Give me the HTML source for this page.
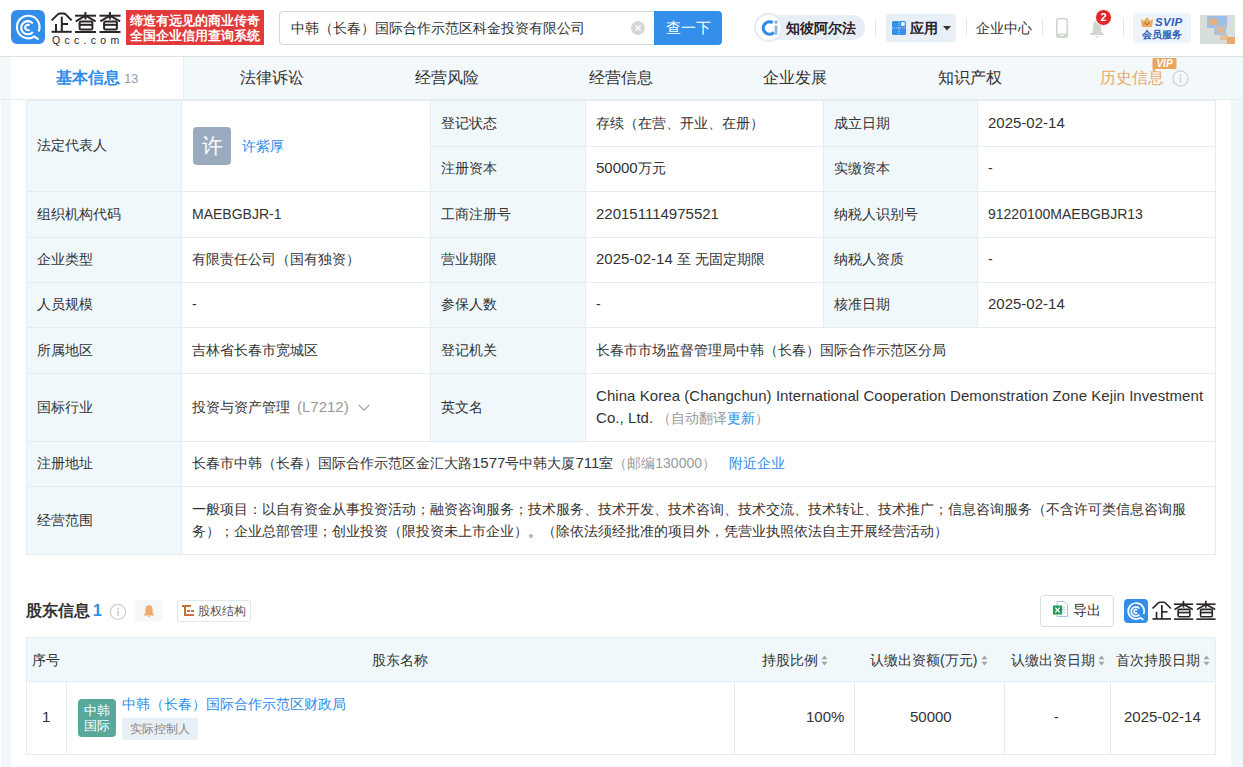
<!DOCTYPE html><html><head><meta charset="utf-8"><style>
*{box-sizing:border-box;margin:0;padding:0}
html,body{width:1243px;height:767px;overflow:hidden}
body{position:relative;background:#eff7fb;font-family:"Liberation Sans",sans-serif;color:#333;font-size:14px}
.a{position:absolute;white-space:nowrap}
#hdr{position:absolute;left:0;top:0;width:1243px;height:57px;background:#fff;border-bottom:1px solid #dde2dd}
#main{position:absolute;left:11px;top:57px;width:1220px;height:710px;background:#fff}
#tabs{position:absolute;left:0;top:57px;width:1243px;height:43px;background:#f3f8fb;border-bottom:1px solid #e6edf3}
.tab{position:absolute;top:0;height:42px;width:174px;text-align:center;line-height:42px;font-size:16px;color:#333}
.cell{position:absolute;border-right:1px solid #e4edf4;border-bottom:1px solid #e4edf4;padding-left:11px;font-size:14px;color:#333;white-space:nowrap}
.cell>span.t{position:absolute;left:10px;top:50%;transform:translateY(calc(-50% - 1px));line-height:22px}
.lb{background:#f0f8fc}
.blue{color:#2d8de8}
.gray{color:#999}
.num{font-size:15px}
</style></head><body>
<div id="hdr"></div><div id="main"></div><div id="tabs"></div><div class="a" style="left:0;top:100px;width:1px;height:667px;background:#fcfdfe"></div>
<div class="a" style="left:11px;top:10px;width:34px;height:34px;border-radius:6px;background:#338eea"></div>
<svg class="a" style="left:11px;top:10px" width="34" height="34" viewBox="0 0 34 34">
<path d="M 27.6 21.5 A 11.3 11.3 0 1 0 22.5 27.0" fill="none" stroke="#fff" stroke-width="2.1"/>
<line x1="22.3" y1="26.0" x2="27.6" y2="29.4" stroke="#fff" stroke-width="2.1"/>
<path d="M 21.8 13.4 A 6.6 6.6 0 1 0 21.8 22.0" fill="none" stroke="#fff" stroke-width="2.1"/>
<path d="M 18.6 15.6 A 2.6 2.6 0 1 0 18.6 19.4" fill="none" stroke="#fff" stroke-width="2.1"/>
</svg>
<svg class="a" style="left:48px;top:6px" width="76" height="38" viewBox="0 0 76 38">
<g fill="none" stroke="#2b2428" stroke-width="2" stroke-linecap="butt">
<path d="M3.6 14.4 L9.6 8.6 Q10.6 7.6 12 7.6 L15.6 7.6 Q17 7.6 18 8.6 L23.6 14.4"/>
<line x1="13.8" y1="10.6" x2="13.8" y2="25.8"/>
<line x1="8" y1="18" x2="8" y2="25.8"/>
<line x1="13.8" y1="18" x2="20" y2="18"/>
<line x1="3.5" y1="25.8" x2="23.8" y2="25.8"/>
<g id="cha">
<line x1="27" y1="9.7" x2="48" y2="9.7"/>
<line x1="37.4" y1="6" x2="37.4" y2="13.5"/>
<path d="M37.4 9.7 L27.8 15.4 M37.4 9.7 L47.6 15.4"/>
<rect x="31.6" y="15.4" width="12.8" height="8" rx="1.5"/>
<line x1="31.6" y1="18.8" x2="44.4" y2="18.8"/>
<line x1="27" y1="26" x2="48" y2="26"/>
</g>
<use href="#cha" transform="translate(24.5 0)"/>
</g></svg>
<div class="a" style="left:52px;top:34px;font-size:10.5px;font-weight:normal;line-height:12px;letter-spacing:4.3px;color:#2b2428">Qcc.com</div>
<div class="a" style="left:126px;top:10px;width:138px;height:35px;background:#e23a3a;color:#fff;font-size:13px;line-height:15px;font-weight:bold;padding:3px 0 0 4px;letter-spacing:0px">缔造有远见的商业传奇<br>全国企业信用查询系统</div>
<div class="a" style="left:279px;top:11px;width:377px;height:34px;border:1px solid #d5dbd7;border-right:none;border-radius:4px 0 0 4px;background:#fff"></div>
<div class="a" style="left:291px;top:19px;font-size:14px;line-height:18px;color:#333">中韩（长春）国际合作示范区科金投资有限公司</div>
<div class="a" style="left:631px;top:21px;width:14px;height:14px;border-radius:50%;background:#d4d9d4"></div>
<svg class="a" style="left:631px;top:21px" width="14" height="14"><path d="M4.5 4.5 L9.5 9.5 M9.5 4.5 L4.5 9.5" stroke="#fff" stroke-width="1.3"/></svg>
<div class="a" style="left:654px;top:11px;width:68px;height:34px;background:#338fea;border-radius:0 4px 4px 0;color:#fff;font-size:15px;line-height:34px;text-align:center">查一下</div>
<div class="a" style="left:768px;top:15px;width:97px;height:25px;border-radius:0 13px 13px 0;background:#e8eef5"></div>
<div class="a" style="left:754px;top:13px;width:29px;height:29px;border-radius:50%;background:#fff;border:2.5px solid #e4ebf3"></div>
<svg class="a" style="left:755px;top:14px" width="27" height="27" viewBox="0 0 27 27">
<path d="M 17.6 8.63 A 6.2 6.2 0 1 0 18.88 18.38" fill="none" stroke="#2f8ae8" stroke-width="3.2"/>
<circle cx="21" cy="8.1" r="1.8" fill="#8db5e2"/>
<line x1="21" y1="11.5" x2="21" y2="20.6" stroke="#8db5e2" stroke-width="2.8"/>
</svg>
<div class="a" style="left:786px;top:19px;font-size:14px;font-weight:bold;line-height:18px;color:#2a2226">知彼阿尔法</div>
<div class="a" style="left:875px;top:19px;width:1px;height:17px;background:#e3e8ee"></div>
<div class="a" style="left:886px;top:14px;width:70px;height:28px;border-radius:3px;background:#e9eff6"></div>
<svg class="a" style="left:892px;top:21px" width="14" height="14" viewBox="0 0 14 14">
<rect x="0" y="0" width="14" height="14" rx="1.5" fill="#3290ea"/>
<rect x="9.2" y="1.2" width="3.6" height="3.6" fill="#fff"/>
<path d="M7 0 V14 M0 7 H14" stroke="#e9f2fc" stroke-width="0.8" stroke-dasharray="1 1"/>
</svg>
<div class="a" style="left:910px;top:19px;font-size:14px;font-weight:bold;line-height:18px;color:#2a2226">应用</div>
<svg class="a" style="left:943px;top:26px" width="8" height="5"><path d="M0 0 H8 L4 4.5 Z" fill="#333"/></svg>
<div class="a" style="left:966px;top:19px;width:1px;height:17px;background:#e3e8ee"></div>
<div class="a" style="left:976px;top:19px;font-size:14px;line-height:18px;color:#333">企业中心</div>
<div class="a" style="left:1042px;top:18px;width:1px;height:17px;background:#e3e8ee"></div>
<svg class="a" style="left:1056px;top:18px" width="12" height="20" viewBox="0 0 12 20">
<rect x="0.8" y="0.8" width="10.4" height="18.4" rx="2" fill="none" stroke="#cfd5cf" stroke-width="1.6"/>
<rect x="0.8" y="15.5" width="10.4" height="3.7" fill="#cfd5cf"/>
<rect x="4.3" y="16.8" width="3.4" height="1" fill="#fff"/>
</svg>
<svg class="a" style="left:1088px;top:18px" width="18" height="21" viewBox="0 0 18 21">
<path d="M9 2.5 C6.5 2.5 5.2 5 5 8 L4.6 13.8 L1.5 17 L16.5 17 L13.4 13.8 L13 8 C12.8 5 11.5 2.5 9 2.5 Z" fill="#d0d6d0"/>
<path d="M7 18.2 H11 L9 20 Z" fill="#d0d6d0"/>
</svg>
<div class="a" style="left:1095px;top:9px;width:17px;height:17px;border-radius:50%;background:#e0262a;border:1px solid #fff;color:#fff;font-size:11px;font-weight:bold;line-height:15px;text-align:center">2</div>
<div class="a" style="left:1123px;top:18px;width:1px;height:18px;background:#e3e8ee"></div>
<div class="a" style="left:1133px;top:13px;width:58px;height:30px;background:#eef4fa"></div>
<svg class="a" style="left:1141px;top:17px" width="12" height="10" viewBox="0 0 12 10"><path d="M0 2 L3 4 L6 0 L9 4 L12 2 L11 10 L1 10 Z" fill="#eea95f"/><path d="M3.5 5 L6 8 L8.5 5" fill="none" stroke="#8a5a3a" stroke-width="1"/></svg>
<div class="a" style="left:1155px;top:15px;font-size:11.5px;font-weight:bold;font-style:italic;line-height:14px;color:#2c5fb5;letter-spacing:0.3px">SVIP</div>
<div class="a" style="left:1142px;top:29px;font-size:10px;font-weight:bold;line-height:12px;color:#2c5fb5">会员服务</div>
<svg class="a" style="left:1200px;top:15px" width="35" height="29" viewBox="0 0 35 29">
<rect width="35" height="29" fill="#d8ded9"/>
<rect x="7" y="1" width="20" height="12" fill="#9ebfe3"/>
<rect x="10" y="4" width="8" height="6" fill="#e8b27a"/>
<rect x="14" y="10" width="12" height="10" fill="#a9c2df"/>
<rect x="17" y="12" width="6" height="6" fill="#e3b789"/>
<rect x="20" y="20" width="8" height="5" fill="#e2c09a"/>
<rect x="27" y="22" width="8" height="7" fill="#eda968"/>
</svg>
<div class="tab" style="left:11px;top:57px;width:173px;background:#fff;color:#2d8de8;font-weight:bold;font-size:16px;height:42px;border-right:1px solid #e6edf3">基本信息 <span style="font-weight:normal;color:#999;font-size:12.5px">13</span></div>
<div class="tab" style="left:185px;top:57px">法律诉讼</div>
<div class="tab" style="left:360px;top:57px">经营风险</div>
<div class="tab" style="left:534px;top:57px">经营信息</div>
<div class="tab" style="left:708px;top:57px">企业发展</div>
<div class="tab" style="left:883px;top:57px">知识产权</div>
<div class="a" style="left:1100px;top:69px;font-size:16px;line-height:18px;color:#eba866">历史信息</div>
<svg class="a" style="left:1152px;top:58px" width="25" height="13" viewBox="0 0 25 13"><path d="M1.5 0 H23.5 Q24.5 0 24.5 1 V10 Q24.5 11 23.5 11 H4 L1 13 L0.5 11 V1 Q0.5 0 1.5 0 Z" fill="#eba65e"/><text x="12.5" y="9.2" text-anchor="middle" font-family="Liberation Sans" font-weight="bold" font-style="italic" font-size="10" fill="#fff">VIP</text></svg>
<svg class="a" style="left:1172px;top:70px" width="17" height="17" viewBox="0 0 17 17"><circle cx="8.5" cy="8.5" r="7.6" fill="none" stroke="#cfd5d0" stroke-width="1.3"/><circle cx="8.5" cy="5" r="0.9" fill="#c9cfca"/><rect x="7.85" y="7" width="1.3" height="5.6" fill="#c9cfca"/></svg>
<div class="a" style="left:26px;top:100px;width:1190px;height:455px;border-top:1px solid #e4edf4;border-left:1px solid #e4edf4"></div>
<div class="cell lb" style="left:27px;top:101px;width:155px;height:91px;"><span class="t">法定代表人</span></div>
<div class="cell" style="left:182px;top:101px;width:249px;height:91px;"><span class="t"></span></div>
<div class="cell lb" style="left:431px;top:101px;width:155px;height:46px;"><span class="t">登记状态</span></div>
<div class="cell" style="left:586px;top:101px;width:238px;height:46px;"><span class="t">存续（在营、开业、在册）</span></div>
<div class="cell lb" style="left:824px;top:101px;width:154px;height:46px;"><span class="t">成立日期</span></div>
<div class="cell" style="left:978px;top:101px;width:238px;height:46px;"><span class="t"><span class="num">2025-02-14</span></span></div>
<div class="cell lb" style="left:431px;top:147px;width:155px;height:45px;"><span class="t">注册资本</span></div>
<div class="cell" style="left:586px;top:147px;width:238px;height:45px;"><span class="t"><span class="num">50000</span>万元</span></div>
<div class="cell lb" style="left:824px;top:147px;width:154px;height:45px;"><span class="t">实缴资本</span></div>
<div class="cell" style="left:978px;top:147px;width:238px;height:45px;"><span class="t">-</span></div>
<div class="cell lb" style="left:27px;top:192px;width:155px;height:46px;"><span class="t">组织机构代码</span></div>
<div class="cell" style="left:182px;top:192px;width:249px;height:46px;"><span class="t">MAEBGBJR-1</span></div>
<div class="cell lb" style="left:431px;top:192px;width:155px;height:46px;"><span class="t">工商注册号</span></div>
<div class="cell" style="left:586px;top:192px;width:238px;height:46px;"><span class="t"><span class="num">220151114975521</span></span></div>
<div class="cell lb" style="left:824px;top:192px;width:154px;height:46px;"><span class="t">纳税人识别号</span></div>
<div class="cell" style="left:978px;top:192px;width:238px;height:46px;"><span class="t">91220100MAEBGBJR13</span></div>
<div class="cell lb" style="left:27px;top:238px;width:155px;height:45px;"><span class="t">企业类型</span></div>
<div class="cell" style="left:182px;top:238px;width:249px;height:45px;"><span class="t">有限责任公司（国有独资）</span></div>
<div class="cell lb" style="left:431px;top:238px;width:155px;height:45px;"><span class="t">营业期限</span></div>
<div class="cell" style="left:586px;top:238px;width:238px;height:45px;"><span class="t"><span class="num">2025-02-14</span> 至 无固定期限</span></div>
<div class="cell lb" style="left:824px;top:238px;width:154px;height:45px;"><span class="t">纳税人资质</span></div>
<div class="cell" style="left:978px;top:238px;width:238px;height:45px;"><span class="t">-</span></div>
<div class="cell lb" style="left:27px;top:283px;width:155px;height:45px;"><span class="t">人员规模</span></div>
<div class="cell" style="left:182px;top:283px;width:249px;height:45px;"><span class="t">-</span></div>
<div class="cell lb" style="left:431px;top:283px;width:155px;height:45px;"><span class="t">参保人数</span></div>
<div class="cell" style="left:586px;top:283px;width:238px;height:45px;"><span class="t">-</span></div>
<div class="cell lb" style="left:824px;top:283px;width:154px;height:45px;"><span class="t">核准日期</span></div>
<div class="cell" style="left:978px;top:283px;width:238px;height:45px;"><span class="t"><span class="num">2025-02-14</span></span></div>
<div class="cell lb" style="left:27px;top:328px;width:155px;height:46px;"><span class="t">所属地区</span></div>
<div class="cell" style="left:182px;top:328px;width:249px;height:46px;"><span class="t">吉林省长春市宽城区</span></div>
<div class="cell lb" style="left:431px;top:328px;width:155px;height:46px;"><span class="t">登记机关</span></div>
<div class="cell" style="left:586px;top:328px;width:630px;height:46px;"><span class="t">长春市市场监督管理局中韩（长春）国际合作示范区分局</span></div>
<div class="cell lb" style="left:27px;top:374px;width:155px;height:68px;"><span class="t">国标行业</span></div>
<div class="cell" style="left:182px;top:374px;width:249px;height:68px;"><span class="t">投资与资产管理<span class="gray" style="margin-left:7px;font-size:15px">(L7212)</span><svg style="margin-left:9px;vertical-align:1px" width="12" height="7" viewBox="0 0 12 7"><path d="M0.6 0.8 L6 6.2 L11.4 0.8" fill="none" stroke="#999" stroke-width="1.1"/></svg></span></div>
<div class="cell lb" style="left:431px;top:374px;width:155px;height:68px;"><span class="t">英文名</span></div>
<div class="cell" style="left:586px;top:374px;width:630px;height:68px;"><span class="t"><span class="num" style="letter-spacing:0.06px">China Korea (Changchun) International Cooperation Demonstration Zone Kejin Investment<br>Co., Ltd.</span> <span class="gray">（自动翻译</span><span class="blue">更新</span><span class="gray">）</span></span></div>
<div class="cell lb" style="left:27px;top:442px;width:155px;height:45px;"><span class="t">注册地址</span></div>
<div class="cell" style="left:182px;top:442px;width:1034px;height:45px;"><span class="t">长春市中韩（长春）国际合作示范区金汇大路<span class="num">1577</span>号中韩大厦<span class="num">711</span>室<span class="gray">（邮编130000）</span><span class="blue" style="margin-left:13px">附近企业</span></span></div>
<div class="cell lb" style="left:27px;top:487px;width:155px;height:68px;"><span class="t">经营范围</span></div>
<div class="cell" style="left:182px;top:487px;width:1034px;height:68px;"><span class="t">一般项目：以自有资金从事投资活动；融资咨询服务；技术服务、技术开发、技术咨询、技术交流、技术转让、技术推广；信息咨询服务（不含许可类信息咨询服<br>务）；企业总部管理；创业投资（限投资未上市企业）。（除依法须经批准的项目外，凭营业执照依法自主开展经营活动）</span></div>
<div class="a" style="left:193px;top:127px;width:38px;height:38px;border-radius:4px;background:#9aabbf;color:#fff;font-size:21px;line-height:38px;text-align:center">许</div>
<div class="a blue" style="left:242px;top:137px;font-size:14px;line-height:18px">许紫厚</div>
<div class="a" style="left:26px;top:601px;font-size:16px;font-weight:bold;line-height:20px;color:#333">股东信息<span style="color:#2d8de8;font-weight:bold;font-size:16px;margin-left:3px">1</span></div>
<svg class="a" style="left:109px;top:603px" width="18" height="18" viewBox="0 0 18 18"><circle cx="9" cy="9" r="7.6" fill="none" stroke="#cbd1cc" stroke-width="1.3"/><circle cx="9" cy="5.6" r="0.9" fill="#c3c9c4"/><rect x="8.3" y="7.6" width="1.4" height="5.4" fill="#c3c9c4"/></svg>
<div class="a" style="left:135px;top:600px;width:27px;height:21px;background:#f4f8fb"></div>
<svg class="a" style="left:142px;top:604px" width="14" height="14" viewBox="0 0 14 14"><path d="M7 1.2 C4.2 1.2 3.4 3.6 3.4 6 L3.4 9 L1.6 11.4 L12.4 11.4 L10.6 9 L10.6 6 C10.6 3.6 9.8 1.2 7 1.2 Z" fill="#efaa67"/><path d="M5.6 12.2 H8.4 L7 13.6 Z" fill="#efaa67"/></svg>
<div class="a" style="left:177px;top:600px;width:74px;height:22px;border:1px solid #dfe8f0;border-radius:2px;font-size:12px;line-height:20px;padding-left:20px;color:#555">股权结构</div>
<svg class="a" style="left:182px;top:605px" width="13" height="12" viewBox="0 0 13 12"><g fill="#c2703c"><rect x="0" y="0" width="9" height="2"/><rect x="2" y="2" width="2" height="9"/><rect x="5" y="5" width="3" height="2"/><rect x="9" y="5" width="3" height="2"/><rect x="4" y="9" width="8" height="2"/></g></svg>
<div class="a" style="left:1040px;top:595px;width:74px;height:32px;border:1px solid #d8dfda;border-radius:3px;background:#fff"></div>
<svg class="a" style="left:1053px;top:601px" width="15" height="16" viewBox="0 0 15 16"><path d="M4 0.5 H11 L14.5 4 V15.5 H4 Z" fill="#fff" stroke="#a9c3df" stroke-width="1"/><path d="M8 6 H12.5 M8 8.5 H12.5 M8 11 H12.5" stroke="#a9c3df" stroke-width="0.9"/><rect x="0" y="4.5" width="9" height="9" fill="#1e9e56"/><path d="M2.3 6.6 L6.7 11.4 M6.7 6.6 L2.3 11.4" stroke="#fff" stroke-width="1.4"/></svg>
<div class="a" style="left:1073px;top:601px;font-size:14px;line-height:18px;color:#333">导出</div>
<div class="a" style="left:1124px;top:599px;width:24px;height:24px;border-radius:4px;background:#338eea"></div>
<svg class="a" style="left:1124px;top:599px" width="24" height="24" viewBox="0 0 34 34">
<path d="M 27.6 21.5 A 11.3 11.3 0 1 0 22.5 27.0" fill="none" stroke="#fff" stroke-width="2.4"/>
<line x1="22.3" y1="26.0" x2="27.6" y2="29.4" stroke="#fff" stroke-width="2.4"/>
<path d="M 21.8 13.4 A 6.6 6.6 0 1 0 21.8 22.0" fill="none" stroke="#fff" stroke-width="2.4"/>
<path d="M 18.6 15.6 A 2.6 2.6 0 1 0 18.6 19.4" fill="none" stroke="#fff" stroke-width="2.4"/>
</svg>
<svg class="a" style="left:1149px;top:599px" width="70" height="27" viewBox="0 4 76 29.5">
<g fill="none" stroke="#2b2428" stroke-width="1.8" stroke-linecap="butt">
<path d="M3.6 14.4 L9.6 8.6 Q10.6 7.6 12 7.6 L15.6 7.6 Q17 7.6 18 8.6 L23.6 14.4"/>
<line x1="13.8" y1="10.6" x2="13.8" y2="25.8"/>
<line x1="8" y1="18" x2="8" y2="25.8"/>
<line x1="13.8" y1="18" x2="20" y2="18"/>
<line x1="3.5" y1="25.8" x2="23.8" y2="25.8"/>
<g id="cha2">
<line x1="27" y1="9.7" x2="48" y2="9.7"/>
<line x1="37.4" y1="6" x2="37.4" y2="13.5"/>
<path d="M37.4 9.7 L27.8 15.4 M37.4 9.7 L47.6 15.4"/>
<rect x="31.6" y="15.4" width="12.8" height="8" rx="1.5"/>
<line x1="31.6" y1="18.8" x2="44.4" y2="18.8"/>
<line x1="27" y1="26" x2="48" y2="26"/>
</g>
<use href="#cha2" transform="translate(24.5 0)"/>
</g></svg>
<div class="a" style="left:26px;top:637px;width:1190px;height:45px;background:#f0f8fc;border:1px solid #e4edf4"></div>
<div class="a" style="left:26px;top:681px;width:1190px;height:74px;border:1px solid #e4edf4;border-top:none"></div>
<div class="a" style="left:66px;top:682px;width:1px;height:72px;background:#e4edf4"></div>
<div class="a" style="left:734px;top:682px;width:1px;height:72px;background:#e4edf4"></div>
<div class="a" style="left:854px;top:682px;width:1px;height:72px;background:#e4edf4"></div>
<div class="a" style="left:1004px;top:682px;width:1px;height:72px;background:#e4edf4"></div>
<div class="a" style="left:1110px;top:682px;width:1px;height:72px;background:#e4edf4"></div>
<div class="a" style="left:32px;top:651px;line-height:18px">序号</div>
<div class="a" style="left:372px;top:651px;line-height:18px">股东名称</div>
<div class="a" style="left:762px;top:651px;line-height:18px">持股比例</div>
<svg class="a" style="left:821px;top:655px" width="7" height="11" viewBox="0 0 7 11"><path d="M3.5 0.5 L6.5 4.3 H0.5 Z M3.5 10.5 L6.5 6.7 H0.5 Z" fill="#a3a3a3"/></svg>
<div class="a" style="left:870px;top:651px;line-height:18px">认缴出资额(万元)</div>
<svg class="a" style="left:981px;top:655px" width="7" height="11" viewBox="0 0 7 11"><path d="M3.5 0.5 L6.5 4.3 H0.5 Z M3.5 10.5 L6.5 6.7 H0.5 Z" fill="#a3a3a3"/></svg>
<div class="a" style="left:1011px;top:651px;line-height:18px">认缴出资日期</div>
<svg class="a" style="left:1098px;top:655px" width="7" height="11" viewBox="0 0 7 11"><path d="M3.5 0.5 L6.5 4.3 H0.5 Z M3.5 10.5 L6.5 6.7 H0.5 Z" fill="#a3a3a3"/></svg>
<div class="a" style="left:1116px;top:651px;line-height:18px">首次持股日期</div>
<svg class="a" style="left:1203px;top:655px" width="7" height="11" viewBox="0 0 7 11"><path d="M3.5 0.5 L6.5 4.3 H0.5 Z M3.5 10.5 L6.5 6.7 H0.5 Z" fill="#a3a3a3"/></svg>
<div class="a num" style="left:42px;top:708px;line-height:18px">1</div>
<div class="a" style="left:78px;top:699px;width:38px;height:38px;border-radius:4px;background:#58a99c;color:#fff;font-size:13px;font-weight:normal;line-height:15px;text-align:center;padding-top:4px">中韩<br>国际</div>
<div class="a blue" style="left:122px;top:695px;line-height:18px">中韩（长春）国际合作示范区财政局</div>
<div class="a" style="left:122px;top:718px;width:76px;height:22px;border-radius:2px;background:#e9eff6;color:#8a8580;font-size:12px;line-height:22px;text-align:center">实际控制人</div>
<div class="a num" style="left:806px;top:708px;line-height:18px">100%</div>
<div class="a num" style="left:910px;top:708px;line-height:18px">50000</div>
<div class="a" style="left:1054px;top:708px;line-height:18px">-</div>
<div class="a num" style="left:1124px;top:708px;line-height:18px">2025-02-14</div>
</body></html>
